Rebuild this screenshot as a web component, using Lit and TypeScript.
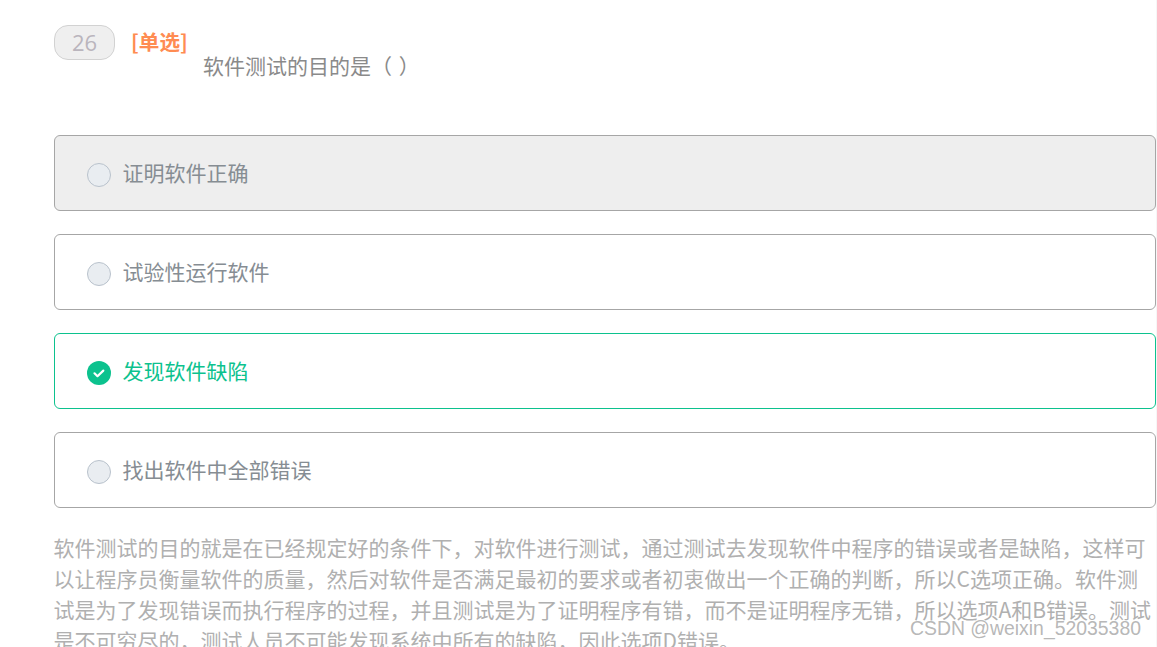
import { LitElement, html, css } from "lit";
import { customElement } from "lit/decorators.js";

const OPTIONS = [
  { text: "证明软件正确", state: "hover" },
  { text: "试验性运行软件", state: "" },
  { text: "发现软件缺陷", state: "correct" },
  { text: "找出软件中全部错误", state: "" },
];

@customElement("app-root")
export class AppRoot extends LitElement {
  static styles = css`
    :host {
      display: block;
      position: relative;
      box-sizing: border-box;
      width: 1157px;
      height: 647px;
      overflow: hidden;
      background: #fff;
      border-right: 1px solid #f6f6f6;
      font-family: "Noto Sans CJK SC", "Noto Sans", sans-serif;
    }
    .page {
      padding: 25px 0 0 54px;
      display: flex;
      flex-direction: column;
    }
    .head {
      display: flex;
      align-items: flex-start;
      height: 110px;
    }
    .num {
      box-sizing: border-box;
      width: 61px;
      height: 35px;
      border: 1px solid #d2d2d2;
      border-radius: 14px;
      background: #efefef;
      color: #bab5bd;
      font: 22px/33px "Open Sans", sans-serif;
      text-align: center;
    }
    .tag {
      margin-left: 16px;
      width: 72px;
      color: #ff8c52;
      font-size: 20.6px;
      line-height: 32px;
      font-weight: 700;
      white-space: nowrap;
    }
    .q {
      margin-top: 22px;
      color: #8a8a8a;
      font-size: 21px;
      line-height: 36px;
      word-spacing: 2px;
    }
    .opts {
      display: flex;
      flex-direction: column;
      gap: 23px;
    }
    .opt {
      box-sizing: border-box;
      height: 76px;
      border: 1px solid #a6a6a6;
      border-radius: 6px;
      padding-left: 32px;
      display: flex;
      align-items: center;
      gap: 11.5px;
      color: #868d93;
      font-size: 21px;
    }
    .label {
      margin-bottom: 2px;
    }
    .opt.hover {
      background: #eeeeee;
    }
    .opt.correct {
      border-color: #0cc28e;
      color: #0cc28e;
    }
    .dot {
      box-sizing: border-box;
      width: 24px;
      height: 24px;
      margin-top: 4px;
      border: 1px solid #b9c2cc;
      border-radius: 50%;
      background: #e9edf1;
      flex: none;
    }
    svg {
      width: 24px;
      height: 24px;
      margin-top: 4px;
      flex: none;
      display: block;
    }
    .exp {
      margin: 24px 0 0 -0.5px;
      color: #b0b0b0;
      font-size: 21px;
      line-height: 31px;
      width: 1100px;
    }
    .mark {
      position: absolute;
      left: 910px;
      top: 615px;
      color: rgba(165, 165, 165, 0.8);
      font: 19.4px/26px "Liberation Sans", sans-serif;
      white-space: nowrap;
    }
  `;

  render() {
    return html`
      <div class="page">
        <div class="head">
          <div class="num">26</div>
          <div class="tag">[单选]</div>
          <div class="q">软件测试的目的是（ ）</div>
        </div>
        <div class="opts">
          ${OPTIONS.map(
            (o) => html`
              <div class="opt ${o.state}">
                ${o.state === "correct"
                  ? html`<svg viewBox="0 0 24 24">
                      <circle cx="12" cy="12" r="12" fill="#0cc28e" />
                      <path d="M7.5 12.3l3 2.9 5.8-5.6" fill="none" stroke="#fff" stroke-width="2.2" stroke-linecap="round" stroke-linejoin="round" />
                    </svg>`
                  : html`<span class="dot"></span>`}
                <span class="label">${o.text}</span>
              </div>
            `
          )}
        </div>
        <p class="exp">软件测试的目的就是在已经规定好的条件下，对软件进行测试，通过测试去发现软件中程序的错误或者是缺陷，这样可以让程序员衡量软件的质量，然后对软件是否满足最初的要求或者初衷做出一个正确的判断，所以C选项正确。软件测试是为了发现错误而执行程序的过程，并且测试是为了证明程序有错，而不是证明程序无错，所以选项A和B错误。测试是不可穷尽的，测试人员不可能发现系统中所有的缺陷，因此选项D错误。</p>
      </div>
      <div class="mark">CSDN @weixin_52035380</div>
    `;
  }
}
